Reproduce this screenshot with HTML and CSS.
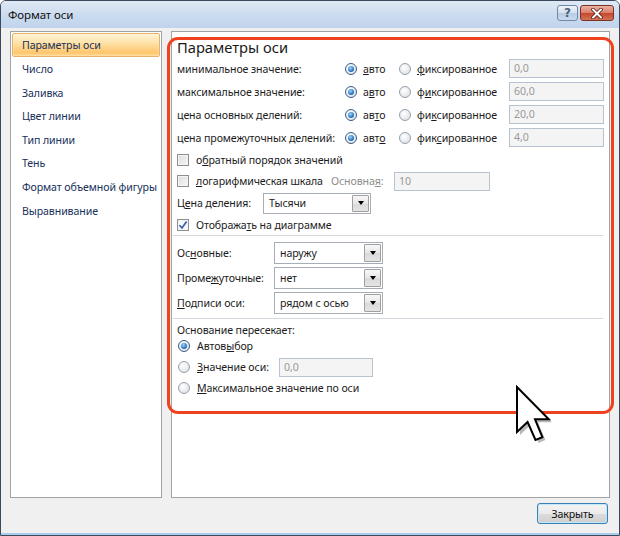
FILE: index.html
```html
<!DOCTYPE html>
<html lang="ru">
<head>
<meta charset="utf-8">
<title>Формат оси</title>
<link rel="stylesheet" href="styles.css">
</head>
<body>
<div class="window">
  <div class="titlebar">
    <span class="title">Формат оси</span>
    <div class="caption-btns">
      <span class="cb cb-help">?</span>
      <span class="cb cb-close">
        <svg width="14" height="11" viewBox="0 0 14 11"><path d="M3 1.5 L11 9.5 M11 1.5 L3 9.5" stroke="#5a1a10" stroke-width="3.6" stroke-linecap="round"/><path d="M3 1.5 L11 9.5 M11 1.5 L3 9.5" stroke="#ffffff" stroke-width="2" stroke-linecap="round"/></svg>
      </span>
    </div>
  </div>
  <div class="client">
    <div class="main">
      <ul class="nav">
        <li class="sel">Параметры оси</li>
        <li>Число</li>
        <li>Заливка</li>
        <li>Цвет линии</li>
        <li>Тип линии</li>
        <li>Тень</li>
        <li>Формат объемной фигуры</li>
        <li>Выравнивание</li>
      </ul>
      <div class="pane">
        <h2 class="heading">Параметры оси</h2>

        <div class="vrow">
          <span>минимальное значение:</span>
          <span class="opt"><span class="radio on"></span><span><u>а</u>вто</span></span>
          <span class="opt"><span class="radio"></span><span><u>ф</u>иксированное</span></span>
          <span class="field">0,0</span>
        </div>
        <div class="vrow">
          <span>максимальное значение:</span>
          <span class="opt"><span class="radio on"></span><span>а<u>в</u>то</span></span>
          <span class="opt"><span class="radio"></span><span>ф<u>и</u>ксированное</span></span>
          <span class="field">60,0</span>
        </div>
        <div class="vrow">
          <span>цена основных делений:</span>
          <span class="opt"><span class="radio on"></span><span>ав<u>т</u>о</span></span>
          <span class="opt"><span class="radio"></span><span>фи<u>к</u>сированное</span></span>
          <span class="field">20,0</span>
        </div>
        <div class="vrow">
          <span>цена промежуточных делений:</span>
          <span class="opt"><span class="radio on"></span><span>авт<u>о</u></span></span>
          <span class="opt"><span class="radio"></span><span>фик<u>с</u>ированное</span></span>
          <span class="field">4,0</span>
        </div>

        <div class="crow h21">
          <span class="check"></span><span>о<u>б</u>ратный порядок значений</span>
        </div>
        <div class="crow h22 logrow">
          <span class="opt wide"><span class="check"></span><span><u>л</u>огарифмическая шкала</span></span>
          <span class="muted">Основна<u>я</u>:</span>
          <span class="field">10</span>
        </div>
        <div class="crow h22 unitrow">
          <span>Ц<u>е</u>на деления:</span>
          <span class="combo c21"><span class="val">Тысячи</span><span class="dd"><span class="tri"></span></span></span>
        </div>
        <div class="crow h21">
          <span class="check on"><svg width="10" height="10" viewBox="0 0 10 10"><path d="M1.5 5.2 L4 8 L8.6 1.6" fill="none" stroke="#3a5aa8" stroke-width="1.7"/></svg></span><span>Отобража<u>т</u>ь на диаграмме</span>
        </div>

        <div class="sep first"></div>

        <div class="srow">
          <span>Ос<u>н</u>овные:</span>
          <span class="combo"><span class="val">наружу</span><span class="dd"><span class="tri"></span></span></span>
        </div>
        <div class="srow">
          <span>Проме<u>ж</u>уточные:</span>
          <span class="combo"><span class="val">нет</span><span class="dd"><span class="tri"></span></span></span>
        </div>
        <div class="srow">
          <span><u>П</u>одписи оси:</span>
          <span class="combo"><span class="val">рядом с осью</span><span class="dd"><span class="tri"></span></span></span>
        </div>

        <div class="sep second"></div>

        <div class="glabel">Основание пересекает:</div>
        <div class="rrow">
          <span class="radio on"></span><span>Автов<u>ы</u>бор</span>
        </div>
        <div class="rrow tall">
          <span class="opt wide2"><span class="radio"></span><span><u>З</u>начение оси:</span></span>
          <span class="field w94">0,0</span>
        </div>
        <div class="rrow">
          <span class="radio"></span><span><u>М</u>аксимальное значение по оси</span>
        </div>
      </div>
    </div>
    <div class="footer">
      <span class="btn">Закрыть</span>
    </div>
  </div>
  <svg class="cursor" width="44" height="62" viewBox="0 0 44 62">
    <polygon points="5,5 5,50 15.6,40 23.5,58 30.4,55.1 23,37.3 36.8,37.3" fill="rgba(0,0,0,0.28)"/>
    <polygon points="2,2 2,47 12.6,37 20.5,55 27.4,52.1 20,34.3 33.8,34.3" fill="#ffffff" stroke="#000000" stroke-width="2" stroke-linejoin="miter"/>
  </svg>
</div>
</body>
</html>
```
FILE: styles.css
```css
* { box-sizing: border-box; }
html, body { margin: 0; padding: 0; }
body {
  width: 620px;
  height: 536px;
  overflow: hidden;
  background: #ffffff;
  font-family: "Noto Sans", "Open Sans", sans-serif;
  font-size: 10.6px;
  letter-spacing: -0.1px;
  color: #1b1b1b;
}
u { text-decoration: underline; text-underline-offset: 1px; }

.window {
  position: relative;
  width: 620px;
  height: 536px;
  border: 1px solid #3b4a5e;
  border-radius: 6px 6px 0 0;
  background: #f0f0f0;
  display: flex;
  flex-direction: column;
  overflow: hidden;
}

/* title bar */
.titlebar {
  flex: none;
  height: 27px;
  display: flex;
  align-items: center;
  padding: 0 5px 0 7px;
  background: linear-gradient(#dfe9f5, #c9daee 60%, #c1d4ec);
}
.title { font-size: 11.5px; color: #101010; }
.caption-btns {
  margin-left: auto;
  align-self: flex-start;
  margin-top: 4px;
  display: flex;
  gap: 2px;
}
.cb {
  height: 16px;
  display: flex;
  align-items: center;
  justify-content: center;
  border-radius: 3px;
}
.cb-help {
  width: 21px;
  border: 1px solid #7189a8;
  background: linear-gradient(#eef3f9, #d3e0ef 50%, #b9cce4 51%, #c9d9ec);
  color: #4d5f7a;
  font-weight: bold;
  font-size: 12px;
  font-family: "DejaVu Sans", sans-serif;
}
.cb-close {
  width: 34px;
  border: 1px solid #7c3224;
  background: linear-gradient(#eab0a2, #d8806a 50%, #c4462d 51%, #d27457);
}

/* client */
.client {
  flex: 1;
  display: flex;
  flex-direction: column;
  padding: 3px 9px 0 9px;
  border-bottom: 2px solid #a9cdea;
}
.main {
  display: flex;
  gap: 9px;
  height: 467px;
}

/* nav */
.nav {
  list-style: none;
  margin: 0;
  padding: 1px;
  width: 152px;
  height: 467px;
  border: 1px solid #a3a3a3;
  background: #ffffff;
}
.nav li {
  height: 23.6px;
  line-height: 22px;
  padding-left: 9px;
  color: #16305a;
  border: 1px solid transparent;
  white-space: nowrap;
}
.nav li.sel {
  height: 24px;
  border-color: #e7b36a;
  border-radius: 2px;
  background: linear-gradient(#fff4d8 0%, #ffe2a9 40%, #ffc66d 85%, #ffd793 100%);
  box-shadow: inset 0 0 2px #fff2d0;
}

/* right pane */
.pane {
  position: relative;
  width: 439px;
  height: 467px;
  border: 1px solid #a3a3a3;
  background: #ffffff;
  padding: 6px 5px 0 5px;
}
.pane::before {
  content: "";
  position: absolute;
  left: -5px;
  top: 5px;
  width: 441px;
  height: 371px;
  border: 3px solid #ef4320;
  border-radius: 11px;
  pointer-events: none;
}
.heading {
  margin: 0;
  height: 19px;
  line-height: 19px;
  font-size: 14.7px;
  font-weight: normal;
  letter-spacing: 0;
  color: #1a1a1a;
}

.vrow {
  display: grid;
  grid-template-columns: 168px 54px 110px 95px;
  height: 23px;
  align-items: center;
}
.opt { display: flex; align-items: center; gap: 6px; }

.radio {
  flex: none;
  width: 12px;
  height: 12px;
  border-radius: 50%;
  border: 1px solid #96a0ab;
  background: radial-gradient(circle at 40% 35%, #ffffff, #dfe3e8 80%);
  position: relative;
}
.radio.on { border-color: #3b5c86; }
.radio.on::after {
  content: "";
  position: absolute;
  left: 2px;
  top: 2px;
  width: 6px;
  height: 6px;
  border-radius: 50%;
  background: radial-gradient(circle at 40% 35%, #9fd8ff, #2b74c1 60%, #174b8a);
}

.field {
  display: block;
  height: 19px;
  line-height: 17px;
  padding-left: 4px;
  border: 1px solid #b7c3d0;
  background: #f4f4f4;
  color: #9a9a9a;
}

.check {
  flex: none;
  width: 12px;
  height: 12px;
  border: 1px solid #8e8f8f;
  background: linear-gradient(135deg, #dcdcdc, #f8f8f8);
  box-shadow: inset 0 0 0 1px #f4f4f4;
  display: flex;
  align-items: center;
  justify-content: center;
}
.check.on { background: #f6f8fb; }

.crow { display: flex; align-items: center; gap: 7px; }
.h21 { height: 21px; }
.h22 { height: 22px; }
.logrow {
  display: grid;
  grid-template-columns: 154px 63px 96px;
  gap: 0;
}
.logrow .opt { gap: 7px; }
.muted { color: #8c8c8c; }
.unitrow {
  display: grid;
  grid-template-columns: 86px 108px;
  gap: 0;
}

.combo {
  display: flex;
  height: 22px;
  border: 1px solid #a6adb6;
  background: #ffffff;
}
.combo.c21 { height: 21px; }
.combo .val { flex: 1; padding-left: 5px; display: flex; align-items: center; }
.combo .dd {
  width: 17px;
  margin: 1px;
  border: 1px solid #a0a0a0;
  border-radius: 1px;
  background: linear-gradient(#f8f8f8, #e6e6e6 50%, #d9d9d9 51%, #e4e4e4);
  display: flex;
  align-items: center;
  justify-content: center;
}
.tri {
  width: 0;
  height: 0;
  border-left: 3.5px solid transparent;
  border-right: 3.5px solid transparent;
  border-top: 4px solid #000000;
}

.sep {
  height: 1px;
  background: #d3d8de;
  margin: 0 1px 0 -4px;
}
.sep.first { margin-bottom: 4px; }
.sep.second { margin-top: 3px; }

.srow {
  display: grid;
  grid-template-columns: 97px 109px;
  height: 25px;
  align-items: center;
}

.glabel { margin-top: 3px; height: 16px; line-height: 16px; }
.rrow {
  display: flex;
  align-items: center;
  gap: 7px;
  height: 16px;
  padding-left: 1px;
}
.rrow.tall {
  height: 26px;
  display: grid;
  grid-template-columns: 101px 94px;
  gap: 0;
}
.rrow.tall .opt { gap: 7px; }

/* footer */
.footer {
  display: flex;
  justify-content: flex-end;
  padding: 5px 2px 0 0;
}
.btn {
  width: 71px;
  height: 21px;
  display: flex;
  align-items: center;
  justify-content: center;
  border: 1px solid #3c7fb1;
  border-radius: 3px;
  background: linear-gradient(#f4f4f4, #ebebeb 50%, #dddddd 51%, #cfcfcf);
  box-shadow: inset 0 0 0 1px #bfe8fb;
  color: #111111;
}

/* annotation cursor */
.cursor {
  position: absolute;
  left: 514px;
  top: 384px;
}
```
